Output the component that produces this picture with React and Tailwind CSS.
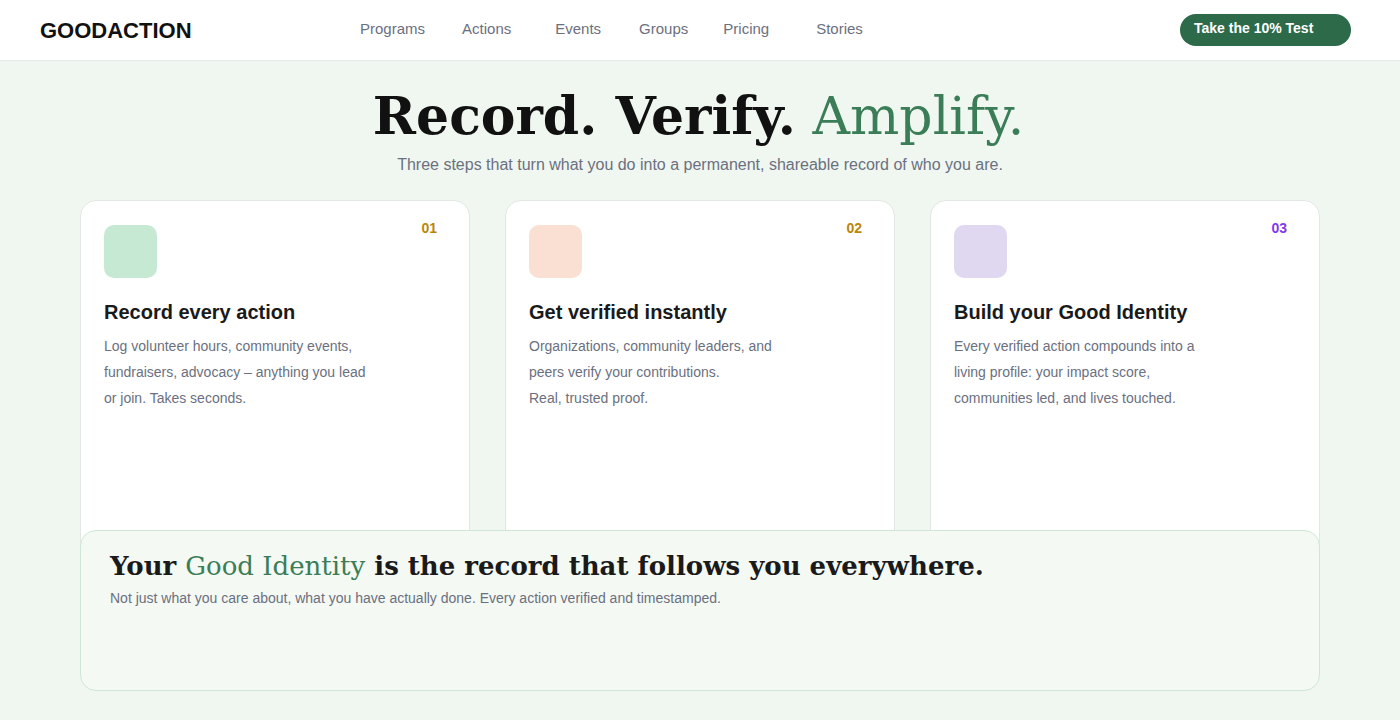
const navItems = [
  { label: 'Programs', cls: 'ml-0' },
  { label: 'Actions', cls: 'ml-[37px]' },
  { label: 'Events', cls: 'ml-[44px]' },
  { label: 'Groups', cls: 'ml-[38px]' },
  { label: 'Pricing', cls: 'ml-[35px]' },
  { label: 'Stories', cls: 'ml-[47px]' },
];

const steps = [
  {
    num: '01',
    numCls: 'text-[#b8860b]',
    iconCls: 'bg-[#c6e9d3]',
    title: 'Record every action',
    body: ['Log volunteer hours, community events, fundraisers, advocacy – anything you lead or join. Takes seconds.'],
  },
  {
    num: '02',
    numCls: 'text-[#b8860b]',
    iconCls: 'bg-[#fadfd3]',
    title: 'Get verified instantly',
    body: ['Organizations, community leaders, and peers verify your contributions.', 'Real, trusted proof.'],
  },
  {
    num: '03',
    numCls: 'text-[#8338ec]',
    iconCls: 'bg-[#e0d8f1]',
    title: 'Build your Good Identity',
    body: ['Every verified action compounds into a living profile: your impact score, communities led, and lives touched.'],
  },
];

const StepCard = ({ step }) => (
  <div className="h-[370px] rounded-2xl border border-[#e3e7e4] bg-white px-[23px] pt-6">
    <div className="flex items-start justify-between">
      <div className={`h-[53px] w-[53px] rounded-[10px] ${step.iconCls}`} />
      <span className={`mr-[9px] -mt-[7px] text-sm font-bold ${step.numCls}`}>{step.num}</span>
    </div>
    <h3 className="mt-5 text-xl font-bold leading-7 text-[#1a1a1a]">{step.title}</h3>
    <p className="mt-[7px] max-w-[270px] text-sm leading-[26px] text-[#6b7080]">
      {step.body.map((line, i) => (
        <span key={i}>
          {i > 0 && <br />}
          {line}
        </span>
      ))}
    </p>
  </div>
);

export default function App() {
  return (
    <div className="min-h-[720px] bg-[#f0f7f0] font-['Liberation_Sans',Arial,sans-serif]">
      {/* top bar */}
      <header className="flex h-[61px] items-center border-b border-[#e6ebe7] bg-white px-10">
        <div className="w-[320px] text-[22px] font-bold text-[#111]">GOODACTION</div>
        <nav className="-mt-[2px] flex text-[15px] text-[#6b7080]">
          {navItems.map((item) => (
            <a key={item.label} className={item.cls}>
              {item.label}
            </a>
          ))}
        </nav>
        <button className="ml-auto mr-[9px] h-8 w-[171px] self-center rounded-full bg-[#2d6a4a] pb-[4px] pl-[14px] text-left text-sm font-bold text-white">
          Take the 10% Test
        </button>
      </header>

      {/* hero */}
      <section className="px-20 pt-6">
        <h1 className="-ml-[3px] text-center font-['DejaVu_Serif',serif] text-[52px] leading-[62px] text-[#111]">
          <span className="font-bold">Record. Verify.</span>{' '}
          <span className="font-normal text-[#3a7d57]">Amplify.</span>
        </h1>
        <p className="mt-[6px] text-center text-base leading-6 text-[#6b7080]">
          Three steps that turn what you do into a permanent, shareable record of who you are.
        </p>

        <div className="mt-[23px] grid grid-cols-3 gap-[35px]">
          {steps.map((s) => (
            <StepCard key={s.num} step={s} />
          ))}
        </div>

        {/* identity panel, overlaps bottom of cards */}
        <div className="relative z-10 -mt-[40px] h-[161px] rounded-2xl border border-[#cfe6d7] bg-[#f4f9f4] px-[29px] pt-[19px]">
          <h2 className="font-['DejaVu_Serif',serif] text-[26px] leading-8 text-[#1a1a1a]">
            <span className="font-bold">Your </span>
            <span className="font-normal text-[#3a7d57]">Good Identity</span>
            <span className="font-bold"> is the record that follows you everywhere.</span>
          </h2>
          <p className="mt-[6px] text-sm text-[#6b7080]">
            Not just what you care about, what you have actually done. Every action verified and timestamped.
          </p>
        </div>
      </section>
    </div>
  );
}
